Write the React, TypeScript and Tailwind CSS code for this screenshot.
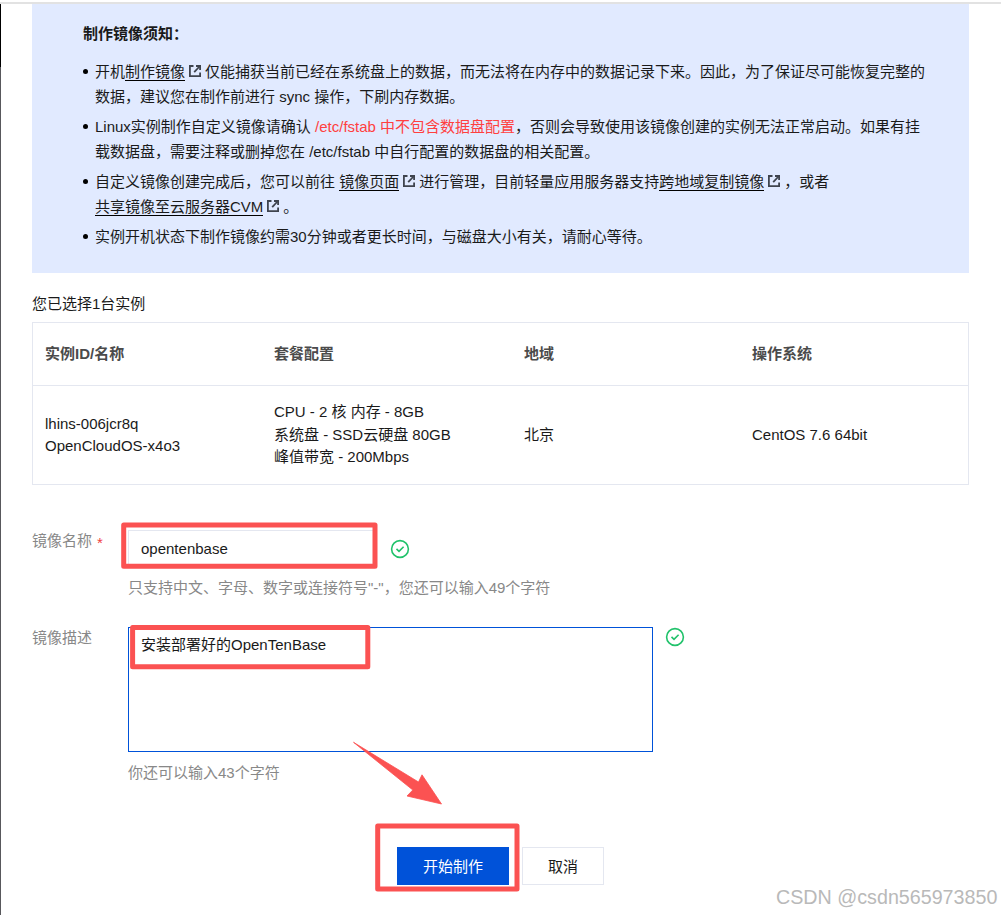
import { ReactNode } from "react";

const columns = ["实例ID/名称", "套餐配置", "地域", "操作系统"];

const instance = [
  ["lhins-006jcr8q", "OpenCloudOS-x4o3"],
  ["CPU - 2 核 内存 - 8GB", "系统盘 - SSD云硬盘 80GB", "峰值带宽 - 200Mbps"],
  ["北京"],
  ["CentOS 7.6 64bit"],
];

const ExternalIcon = () => (
  <svg
    viewBox="0 0 12 12"
    className="mx-1 inline-block h-3 w-3 align-[0px]"
    fill="none"
    stroke="#3f444e"
    strokeWidth="1.8"
  >
    <path d="M4.5 1H0.9V11.1H11.1V7.5" />
    <path d="M7 1H11.1V5" />
    <path d="M11 1L5.2 7.2" />
  </svg>
);

const DocLink = ({ children }: { children: ReactNode }) => (
  <>
    <a className="border-b border-black">{children}</a>
    <ExternalIcon />
  </>
);

const NoticeItem = ({ children }: { children: ReactNode }) => (
  <li className="flex items-start whitespace-nowrap">
    <span className="mt-[10px] mr-[7px] h-[5px] w-[5px] shrink-0 rounded-full bg-black" />
    <div>{children}</div>
  </li>
);

const SuccessIcon = () => (
  <svg
    viewBox="0 0 20 20"
    className="h-5 w-5"
    fill="none"
    stroke="#21c26b"
    strokeWidth="1.6"
  >
    <circle cx="10" cy="10" r="8.4" />
    <path d="M6.5 9.9L9 12.3L13.6 7.7" />
  </svg>
);

const Notice = () => (
  <div className="mt-px h-[269px] bg-[#e1eaff] pt-[17px] pl-[51px] leading-[25px]">
    <h3 className="mb-[13px] font-bold">制作镜像须知：</h3>
    <ul className="flex flex-col gap-[5px]">
      <NoticeItem>
        开机<DocLink>制作镜像</DocLink>
        仅能捕获当前已经在系统盘上的数据，而无法将在内存中的数据记录下来。因此，为了保证尽可能恢复完整的
        <br />
        数据，建议您在制作前进行 sync 操作，下刷内存数据。
      </NoticeItem>
      <NoticeItem>
        Linux实例制作自定义镜像请确认{" "}
        <span className="text-[#ff4040]">/etc/fstab 中不包含数据盘配置</span>
        ，否则会导致使用该镜像创建的实例无法正常启动。如果有挂
        <br />
        载数据盘，需要注释或删掉您在 /etc/fstab 中自行配置的数据盘的相关配置。
      </NoticeItem>
      <NoticeItem>
        自定义镜像创建完成后，您可以前往 <DocLink>镜像页面</DocLink>
        进行管理，目前轻量应用服务器支持<DocLink>跨地域复制镜像</DocLink>
        ，或者
        <br />
        <DocLink>共享镜像至云服务器CVM</DocLink>。
      </NoticeItem>
      <NoticeItem>
        实例开机状态下制作镜像约需30分钟或者更长时间，与磁盘大小有关，请耐心等待。
      </NoticeItem>
    </ul>
  </div>
);

const InstanceTable = () => (
  <div className="mt-[6.5px] h-[163px] border border-[#e4e7f0]">
    <div className="grid h-[63px] grid-cols-[229px_250px_228px_1fr] items-center border-b border-[#e4e7f0] pt-[2px] pl-3 font-bold text-[#4b4b4b]">
      {columns.map((title) => (
        <div key={title}>{title}</div>
      ))}
    </div>
    <div className="grid h-[98px] grid-cols-[229px_250px_228px_1fr] items-center pt-px pl-3">
      {instance.map((lines) => (
        <div key={lines[0]}>
          {lines.map((line) => (
            <p key={line}>{line}</p>
          ))}
        </div>
      ))}
    </div>
  </div>
);

const ImageForm = () => (
  <div className="mt-[45px] text-[#888]">
    <div className="flex h-[97px]">
      <label className="flex h-[22px] w-24">
        镜像名称
        <span className="mt-[2px] ml-[5px] text-[#f04040]">*</span>
      </label>
      <div>
        <div className="flex items-start gap-[13px]">
          <input
            readOnly
            value="opentenbase"
            className="h-[37px] w-[249px] border border-[#e4e7f0] px-3 text-[#1a1a1a] outline-none"
          />
          <div className="mt-[9px]">
            <SuccessIcon />
          </div>
        </div>
        <p className="mt-[10px]">
          只支持中文、字母、数字或连接符号"-"，您还可以输入49个字符
        </p>
      </div>
    </div>
    <div className="flex">
      <label className="w-24">镜像描述</label>
      <div>
        <div className="flex items-start gap-3">
          <textarea
            readOnly
            value="安装部署好的OpenTenBase"
            className="block h-[125px] w-[525px] resize-none border border-[#0052d9] px-3 py-[6px] text-[#1a1a1a] outline-none"
          />
          <SuccessIcon />
        </div>
        <p className="mt-[10px]">你还可以输入43个字符</p>
      </div>
    </div>
  </div>
);

// Red markers drawn on top of the page
const Annotations = () => (
  <svg
    viewBox="0 0 1001 915"
    className="pointer-events-none absolute inset-0 h-[915px] w-[1001px]"
    fill="none"
    stroke="#fb5252"
    strokeWidth="5"
    strokeLinejoin="round"
  >
    <rect x="123.7" y="525" width="251.3" height="41.3" />
    <rect x="132.6" y="627.4" width="235.2" height="39.4" />
    <rect x="377.7" y="826" width="139.3" height="63" />
    <path
      d="M353.5 742.3L418.5 782L422 774.8L441.5 804L407 796L412.8 790Z"
      fill="#fb5252"
      strokeWidth="0.8"
    />
  </svg>
);

export default function App() {
  return (
    <div className="relative flex h-[915px] w-[1001px] flex-col overflow-hidden bg-white pt-[2px] font-['Liberation_Sans','Noto_Sans_CJK_SC',sans-serif] text-[15px] leading-[22.5px] text-[#1a1a1a]">
      <div className="h-[2px] shrink-0 bg-[#e2e2e2]" />
      <div className="flex flex-1">
        <div className="flex w-px flex-col bg-[#58585c]">
          <div className="h-[63px] bg-black" />
        </div>
        <main className="-mt-px w-[968px] pl-[31px]">
          <Notice />
          <p className="mt-[19.5px]">您已选择1台实例</p>
          <InstanceTable />
          <ImageForm />
          <div className="mt-[63px] flex gap-[13px] pl-[365px]">
            <button className="h-[38px] w-28 bg-[#0052d9] pt-[2px] text-white">
              开始制作
            </button>
            <button className="h-[38px] w-[82px] border border-[#e4e7f0] pt-[2px]">
              取消
            </button>
          </div>
        </main>
      </div>
      <Annotations />
      <span className="absolute top-[886px] left-[776px] text-[19.7px] whitespace-nowrap text-[#b9b9b9]">
        CSDN @csdn565973850
      </span>
    </div>
  );
}
